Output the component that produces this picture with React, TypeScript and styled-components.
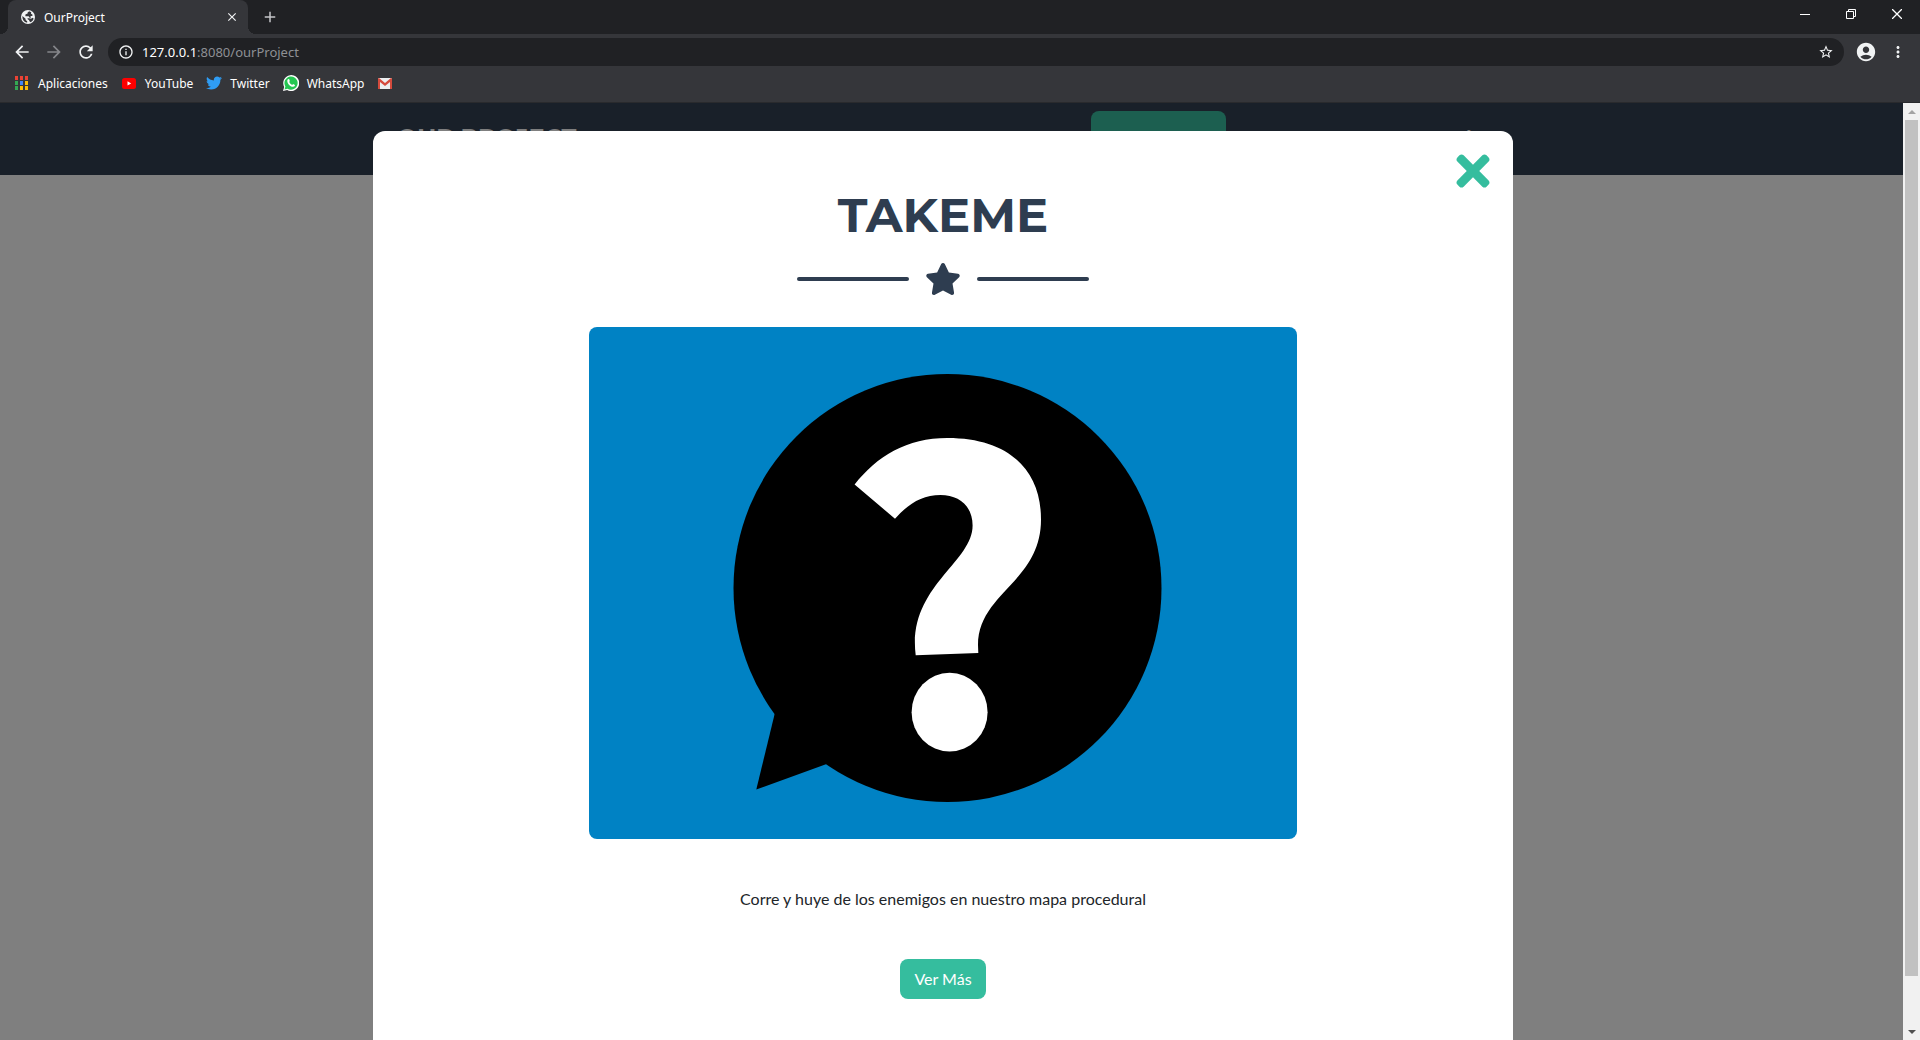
import React from "react";
import styled, { createGlobalStyle } from "styled-components";
import {
  MdArrowBack,
  MdArrowForward,
  MdRefresh,
  MdInfoOutline,
  MdStarBorder,
  MdAccountCircle,
  MdMoreVert,
  MdClose,
  MdAdd,
} from "react-icons/md";
import { FaStar, FaTimes, FaTwitter } from "react-icons/fa";

const uiFont = `"Segoe UI", "Noto Sans", sans-serif`;
const headingFont = `Montserrat, Inter, sans-serif`;
const bodyFont = `Lato, sans-serif`;

const GlobalStyle = createGlobalStyle`
  *, *::before, *::after { box-sizing: border-box; }
  body { margin: 0; background: #fff; overflow: hidden; }
  button { border: 0; padding: 0; background: none; font: inherit; color: inherit; cursor: pointer; }
  svg { display: block; flex: none; }
`;

const Window = styled.div`
  display: flex;
  flex-direction: column;
  height: 100vh;
  font-family: ${uiFont};
`;

const TabStrip = styled.div`
  display: flex;
  align-items: stretch;
  height: 34px;
  padding-left: 8px;
  background: #202124;
  color: #fff;
`;

const Tab = styled.div`
  position: relative;
  display: flex;
  align-items: center;
  gap: 8px;
  width: 240px;
  padding: 0 8px 0 12px;
  border-radius: 8px 8px 0 0;
  background: #35363a;
  font-size: 12px;

  &::before,
  &::after {
    content: "";
    position: absolute;
    bottom: 0;
    width: 8px;
    height: 8px;
  }
  &::before {
    right: 100%;
    background: radial-gradient(circle at 0 0, transparent 8px, #35363a 8px);
  }
  &::after {
    left: 100%;
    background: radial-gradient(circle at 100% 0, transparent 8px, #35363a 8px);
  }
`;

const TabTitle = styled.span`
  flex: 1;
`;

const IconButton = styled.button<{ $size?: number; $dim?: boolean }>`
  display: flex;
  align-items: center;
  justify-content: center;
  width: ${(p) => p.$size ?? 32}px;
  height: ${(p) => p.$size ?? 32}px;
  color: ${(p) => (p.$dim ? "#85868a" : "#f1f3f4")};
`;

const NewTab = styled(IconButton)`
  margin-left: 8px;
  height: 34px;
`;

const WindowControls = styled.div`
  display: flex;
  margin-left: auto;
`;

const WindowButton = styled.button`
  display: flex;
  align-items: center;
  justify-content: center;
  width: 46px;
  height: 28px;
`;

const Toolbar = styled.div`
  display: flex;
  align-items: center;
  height: 36px;
  padding: 0 6px;
  background: #35363a;
`;

const AddressBar = styled.form`
  display: flex;
  align-items: center;
  flex: 1;
  height: 28px;
  margin: 0 6px;
  padding: 0 10px;
  border-radius: 14px;
  background: #202124;
  color: #f1f3f4;
  font-size: 13px;
`;

const Host = styled.label`
  margin-left: 8px;
  color: #fff;
`;

const PathInput = styled.input`
  flex: 1;
  min-width: 0;
  padding: 0;
  border: 0;
  outline: 0;
  background: none;
  color: #8e9094;
  font: inherit;
`;

const Bookmarks = styled.nav`
  display: flex;
  align-items: center;
  gap: 13px;
  height: 33px;
  padding: 0 15px 6px;
  border-bottom: 1px solid #292a2d;
  background: #35363a;
`;

const Bookmark = styled.a`
  display: flex;
  align-items: center;
  gap: 8px;
  color: #fff;
  font-size: 12px;
  text-decoration: none;
`;

const Viewport = styled.div`
  display: flex;
  flex: 1;
  min-height: 0;
`;

const Page = styled.main`
  position: relative;
  flex: 1;
  overflow: hidden;
  background: #fff;
`;

const SiteHeader = styled.header`
  padding: 8px 17px 8px 0;
  background: #324052;
  color: #fff;
  font-family: ${headingFont};
  font-weight: 700;
`;

const HeaderInner = styled.div`
  display: flex;
  align-items: center;
  justify-content: space-between;
  max-width: 1140px;
  height: 56px;
  margin: 0 auto;
  padding: 0 10px 0 24px;
`;

const Brand = styled.a`
  padding-bottom: 4px;
  color: #fff;
  font-size: 24px;
  text-decoration: none;
`;

const SiteNav = styled.nav`
  display: flex;
  justify-content: space-between;
  width: 412px;
`;

const NavLink = styled.a<{ $active?: boolean }>`
  display: flex;
  align-items: center;
  justify-content: center;
  min-width: 135px;
  height: 56px;
  padding: 0 16px;
  border-radius: 8px;
  background: ${(p) => (p.$active ? "#38bfa0" : "transparent")};
  color: #fff;
  font-size: 16px;
  text-decoration: none;
`;

const Backdrop = styled.div`
  position: absolute;
  inset: 0;
  padding: 28px 17px 0 0;
  background: rgba(0, 0, 0, 0.5);
`;

const Dialog = styled.section`
  position: relative;
  display: flex;
  flex-direction: column;
  align-items: center;
  max-width: 1140px;
  min-height: 100%;
  margin: 0 auto;
  padding: 56px 16px 64px;
  border-radius: 12px;
  background: #fff;
  color: #212529;
  font-family: ${bodyFont};
  font-size: 16px;
  line-height: 24px;
`;

const CloseButton = styled.button`
  position: absolute;
  top: 16px;
  right: 16px;
  color: #35bd9e;
`;

const Title = styled.h2`
  margin: 0;
  color: #2e3d50;
  font-family: ${headingFont};
  font-size: 48px;
  font-weight: 700;
  line-height: 56px;
`;

const Divider = styled.div`
  display: flex;
  align-items: center;
  gap: 16px;
  margin: 20px 0 32px;
  color: #2e3d50;
`;

const DividerLine = styled.span`
  width: 112px;
  height: 4px;
  border-radius: 2px;
  background: currentColor;
`;

const DividerStar = styled(FaStar)`
  width: 36px;
  height: 32px;
`;

const Illustration = styled.svg`
  width: 708px;
  max-width: 100%;
  border-radius: 8px;
`;

const Description = styled.p`
  margin: 48px 0;
`;

const PrimaryButton = styled.button`
  height: 40px;
  padding: 0 14px;
  border-radius: 8px;
  background: #35bd9e;
  color: #fff;
`;

const Scrollbar = styled.div`
  display: flex;
  flex-direction: column;
  width: 17px;
  background: #f1f1f1;
`;

const ScrollArrow = styled.button<{ $down?: boolean }>`
  display: flex;
  align-items: center;
  justify-content: center;
  height: 17px;
  color: ${(p) => (p.$down ? "#505050" : "#a3a3a3")};
`;

const ScrollTrack = styled.div`
  flex: 1;
  padding: 0 2px;
`;

const ScrollThumb = styled.div`
  height: 94.8%;
  background: #c1c1c1;
`;

const appColors = [
  "#ea4335", "#ea4335", "#ea4335",
  "#34a853", "#4285f4", "#fbbc05",
  "#34a853", "#fbbc05", "#fbbc05",
];

const GlobeIcon = () => (
  <svg width="16" height="16" viewBox="0 0 16 16">
    <circle cx="8" cy="8" r="7" fill="#f1f3f4" />
    <path
      d="M9.2 2.2L7.6 3.4V4.6L5.4 5.4V7.2H8.6L9.6 8.4V9.8H11L12.6 8.8L13.6 9.4C13.2 11 12.2 12.4 10.6 13.2L9.2 12V10.8H8L7.4 9.2H10.6V7H12.4V5.6L11 4.8L11.2 3.2Z M2.4 7L5.6 9.8V11L7.2 12.2V13.6C4.4 13.4 2.2 11 2.4 7Z"
      fill="#35363a"
    />
  </svg>
);

const AppsIcon = () => (
  <svg width="15" height="14" viewBox="0 0 15 14">
    {appColors.map((c, i) => (
      <rect key={i} x={(i % 3) * 5} y={Math.floor(i / 3) * 5} width="3" height="4" fill={c} />
    ))}
  </svg>
);

const YouTubeIcon = () => (
  <svg width="16" height="16" viewBox="0 0 16 16">
    <rect x="1" y="3" width="14" height="11" rx="2.5" fill="#f00" />
    <path d="M6.5 6.2v4.4l3.7-2.2z" fill="#fff" />
  </svg>
);

const WhatsAppIcon = () => (
  <svg width="16" height="16" viewBox="0 0 16 16">
    <path d="M0 16L1.2 11.9A8 8 0 1 1 4.2 15z" fill="#fff" />
    <path d="M1.5 14.5L2.4 11.5A6.6 6.6 0 1 1 4.6 13.7z" fill="#25c652" />
    <path
      d="M5.2 4L6.2 4.2L6.8 5.9L6.2 6.9C6.8 8.2 7.8 9.2 9.2 9.9L10.1 9.1L11.9 10L11.8 11.1C8.8 13.6 3.4 8.4 4.4 4.9Z"
      fill="#fff"
    />
  </svg>
);

const GmailIcon = () => (
  <svg width="16" height="16" viewBox="0 0 16 16">
    <rect x="1" y="3" width="14" height="11" rx="1" fill="#eceff1" />
    <path d="M1 3.5L2 3L8 8L14 3L15 3.5V14H13V7L8 11L3 7V14H1z" fill="#d54b3d" />
  </svg>
);

const QuestionBubble = () => (
  <Illustration viewBox="0 0 708 512" role="img" aria-label="TakeMe">
    <rect width="708" height="512" fill="#0082c4" />
    <circle cx="358.5" cy="261" r="214" />
    <path d="M185.7 386.8L167.3 462.5L237.6 437.1L260 380Z" />
    <path
      d="M265.6 157.6C288 129 318 111 358.4 111C420 111 452 143 452 192.4C452 255 389 266 389 318L389.3 325.9L326.7 328.3C318 260 383.6 236 383.6 198.5C383.6 179 370 168 351.5 168C333 168 319 177 306 191.7Z"
      fill="#fff"
    />
    <ellipse cx="360.6" cy="385.2" rx="38" ry="39.4" fill="#fff" />
  </Illustration>
);

export default function App() {
  return (
    <>
      <GlobalStyle />
      <Window>
        <TabStrip>
          <Tab>
            <GlobeIcon />
            <TabTitle>OurProject</TabTitle>
            <IconButton $size={16} aria-label="Cerrar pestaña">
              <MdClose size={14} />
            </IconButton>
          </Tab>
          <NewTab $size={28} aria-label="Nueva pestaña">
            <MdAdd size={18} color="#c4c5c8" />
          </NewTab>
          <WindowControls>
            <WindowButton aria-label="Minimizar">
              <svg width="10" height="10" stroke="#fff"><path d="M0 5.5h10" /></svg>
            </WindowButton>
            <WindowButton aria-label="Restaurar">
              <svg width="10" height="10" fill="none" stroke="#fff">
                <path d="M.5 2.5h7v7h-7zM2.5 2.5v-2h7v7h-2" />
              </svg>
            </WindowButton>
            <WindowButton aria-label="Cerrar">
              <svg width="10" height="10" stroke="#fff" strokeWidth="1.3">
                <path d="M0 0l10 10M10 0L0 10" />
              </svg>
            </WindowButton>
          </WindowControls>
        </TabStrip>

        <Toolbar>
          <IconButton aria-label="Atrás"><MdArrowBack size={20} /></IconButton>
          <IconButton $dim aria-label="Adelante"><MdArrowForward size={20} /></IconButton>
          <IconButton aria-label="Recargar"><MdRefresh size={20} /></IconButton>
          <AddressBar>
            <MdInfoOutline size={16} />
            <Host htmlFor="address">127.0.0.1</Host>
            <PathInput id="address" defaultValue=":8080/ourProject" />
            <IconButton type="button" $size={16} aria-label="Añadir a favoritos">
              <MdStarBorder size={16} />
            </IconButton>
          </AddressBar>
          <IconButton aria-label="Perfil"><MdAccountCircle size={22} /></IconButton>
          <IconButton aria-label="Menú"><MdMoreVert size={18} /></IconButton>
        </Toolbar>

        <Bookmarks>
          <Bookmark href="#apps"><AppsIcon />Aplicaciones</Bookmark>
          <Bookmark href="#youtube"><YouTubeIcon />YouTube</Bookmark>
          <Bookmark href="#twitter"><FaTwitter size={16} color="#2f9df4" />Twitter</Bookmark>
          <Bookmark href="#whatsapp"><WhatsAppIcon />WhatsApp</Bookmark>
          <Bookmark href="#gmail" aria-label="Gmail"><GmailIcon /></Bookmark>
        </Bookmarks>

        <Viewport>
          <Page>
            <SiteHeader>
              <HeaderInner>
                <Brand href="#top">OUR PROJECT</Brand>
                <SiteNav>
                  <NavLink href="#proyectos" $active>PROYECTOS</NavLink>
                  <NavLink href="#sesion">INICIAR SESIÓN</NavLink>
                </SiteNav>
              </HeaderInner>
            </SiteHeader>
            <Backdrop>
              <Dialog role="dialog" aria-modal="true" aria-labelledby="dialog-title">
                <CloseButton aria-label="Cerrar ventana">
                  <FaTimes size={48} />
                </CloseButton>
                <Title id="dialog-title">TAKEME</Title>
                <Divider>
                  <DividerLine />
                  <DividerStar />
                  <DividerLine />
                </Divider>
                <QuestionBubble />
                <Description>Corre y huye de los enemigos en nuestro mapa procedural</Description>
                <PrimaryButton>Ver Más</PrimaryButton>
              </Dialog>
            </Backdrop>
          </Page>
          <Scrollbar>
            <ScrollArrow aria-label="Subir">
              <svg width="8" height="4" fill="currentColor"><path d="M0 4l4-4 4 4z" /></svg>
            </ScrollArrow>
            <ScrollTrack><ScrollThumb /></ScrollTrack>
            <ScrollArrow $down aria-label="Bajar">
              <svg width="8" height="4" fill="currentColor"><path d="M0 0l4 4 4-4z" /></svg>
            </ScrollArrow>
          </Scrollbar>
        </Viewport>
      </Window>
    </>
  );
}
